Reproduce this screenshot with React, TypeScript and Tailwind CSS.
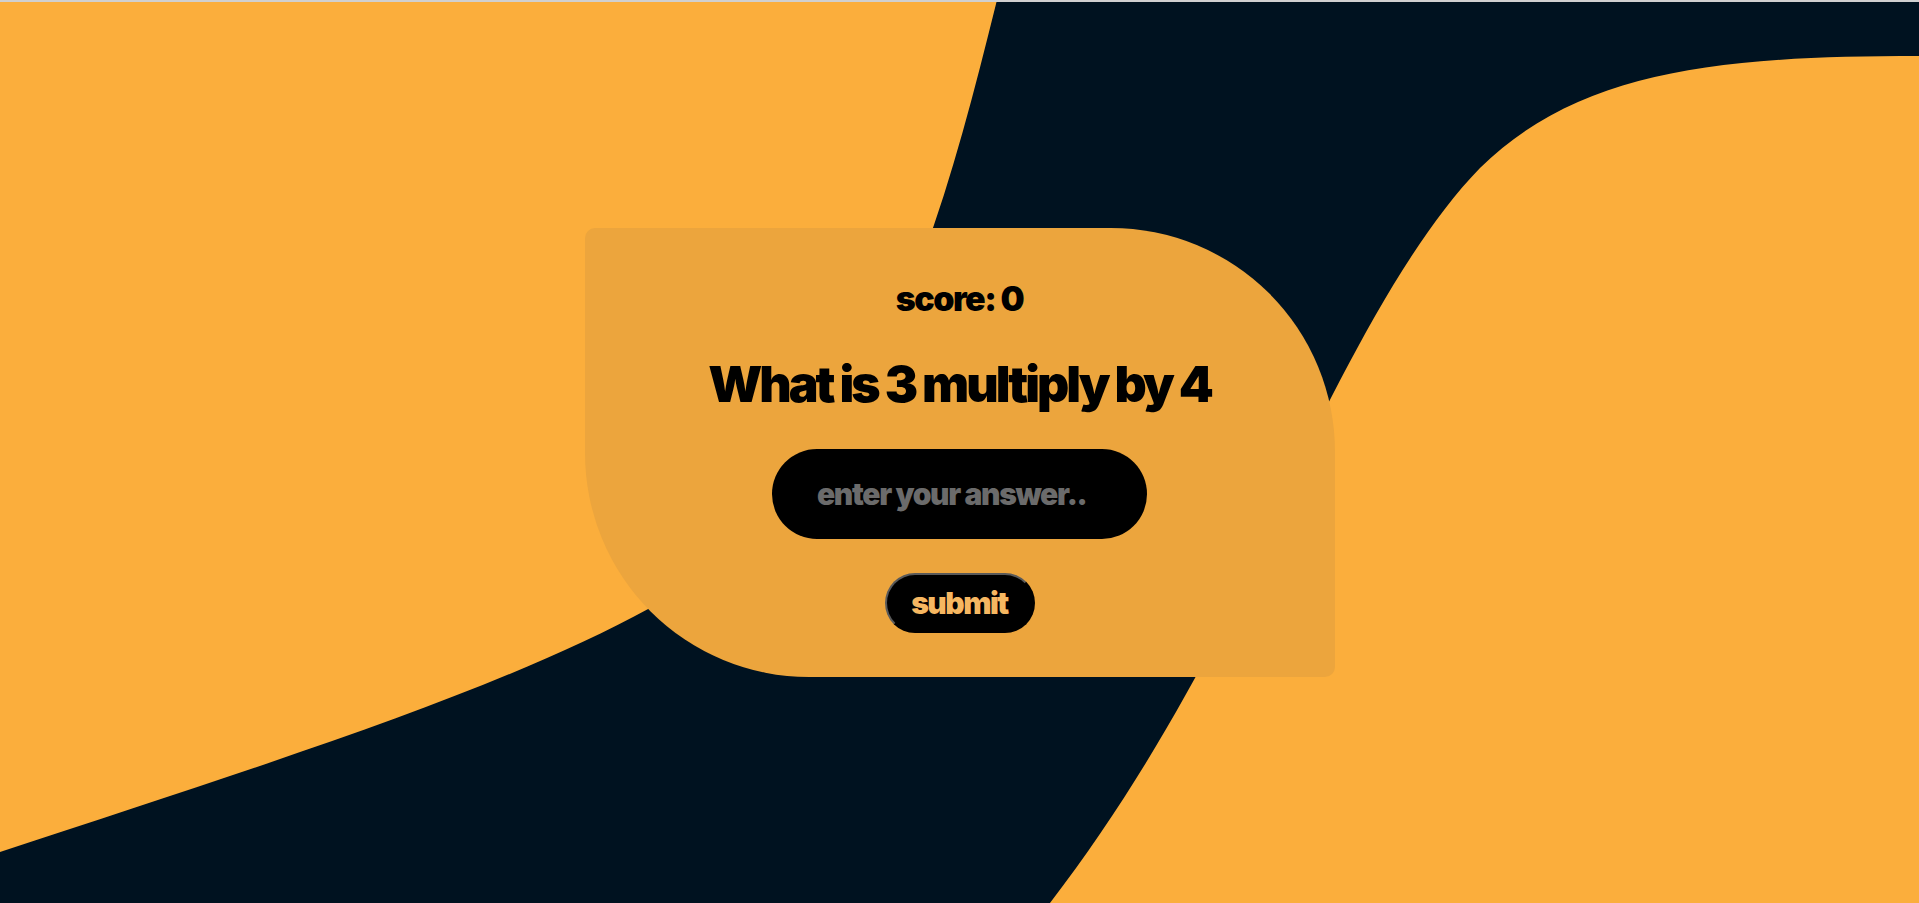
import React from "react";

export default function App() {
  return (
    <div className="flex h-screen w-full flex-col overflow-hidden" style={{ fontFamily: "Inter, 'Noto Sans', sans-serif" }}>
      <div className="h-[2px] w-full shrink-0 bg-[#d0d0d0]" />
      <div className="relative flex flex-1 items-center justify-center bg-[#001220]">
        <svg
          className="absolute inset-0 h-full w-full"
          viewBox="0 2 1919 901"
          preserveAspectRatio="none"
        >
          <rect x="0" y="0" width="1919" height="903" fill="#001220" />
          <path
            d="M0 0 H997 C 935 250, 875 470, 650 608 C 500 690, 280 760, 0 852 Z"
            fill="#FBAE3C"
          />
          <path
            d="M1919 56 C 1720 56, 1580 70, 1480 168 C 1400 250, 1330 400, 1280 500 C 1245 590, 1160 760, 1050 903 H1919 Z"
            fill="#FBAE3C"
          />
        </svg>
        <div className="relative flex h-[449px] w-[750px] flex-col items-center rounded-[10px_224px_10px_224px] bg-[#eca53d] pt-[51px]">
          <div className="text-[34px] font-black leading-[40px] tracking-[-0.045em] text-black">score: 0</div>
          <div className="mt-[37px] text-[50px] font-black leading-[56px] tracking-[-0.06em] text-black">
            What is 3 multiply by 4
          </div>
          <input
            type="text"
            placeholder="enter your answer.."
            className="mt-[37px] h-[90px] w-[375px] rounded-full bg-black pl-[45px] pr-6 text-[30px] font-black tracking-[-0.045em] text-white outline-none placeholder:text-[#6b6b6b]"
          />
          <button className="mt-[34px] flex h-[60px] w-[150px] items-center justify-center rounded-full border-2 border-t-[#5a5a5a] border-l-[#5a5a5a] border-r-black border-b-black bg-black text-[30px] font-black tracking-[-0.05em] text-[#f6b761]">
            submit
          </button>
        </div>
      </div>
    </div>
  );
}
